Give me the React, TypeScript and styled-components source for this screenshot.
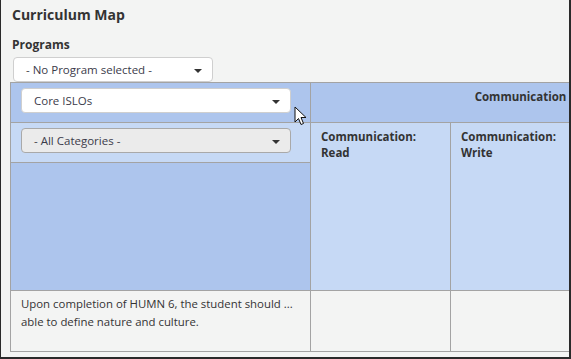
import React from 'react'
import styled, { createGlobalStyle } from 'styled-components'

const GlobalStyle = createGlobalStyle`
  html, body {
    margin: 0;
    padding: 0;
    background: #ffffff;
  }
  body {
    font-family: 'Open Sans', 'Noto Sans', sans-serif;
    color: #333333;
  }
`

const Frame = styled.div`
  position: relative;
  box-sizing: border-box;
  width: 571px;
  height: 359px;
  overflow: hidden;
  background: #f3f4f3;
  border-left: 1px solid #2a2a2a;
  border-right: 2px solid #2a2a2a;
  border-bottom: 2px solid #2a2a2a;
  padding: 5px 0 0 11px;
`

const Title = styled.h1`
  margin: 0;
  font-size: 14px;
  font-weight: 700;
  line-height: 20px;
  color: #333;
`

const Label = styled.div`
  margin-top: 12px;
  font-size: 12px;
  font-weight: 700;
  line-height: 16px;
  color: #333;
`

const SelectBox = styled.div<{ $width: number; $muted?: boolean }>`
  box-sizing: border-box;
  width: ${(p) => p.$width}px;
  height: 25px;
  display: flex;
  align-items: center;
  justify-content: space-between;
  padding: 0 10px 0 12px;
  border: 1px solid ${(p) => (p.$muted ? '#a9a9a9' : '#cfcfcf')};
  border-radius: 4px;
  background: ${(p) => (p.$muted ? '#ebebeb' : '#ffffff')};
  font-size: 11.5px;
  font-weight: 400;
  color: #3b3b4a;
  text-align: left;
`

const Caret = styled.span`
  width: 0;
  height: 0;
  border-left: 4px solid transparent;
  border-right: 4px solid transparent;
  border-top: 4px solid #333;
  margin-top: 2px;
`

const ProgramSelect = styled(SelectBox)`
  margin-top: 4px;
  margin-left: 1px;
`

const TableWrap = styled.div`
  margin-left: -2px;
  width: 760px;
`

const MapTable = styled.table`
  border-collapse: collapse;
  table-layout: fixed;
  width: 720px;
  border-left: 1px solid #a3a3a3;
  border-top: 1px solid #a3a3a3;
`

const Cell = styled.td<{ $bg: string; $h?: number }>`
  background: ${(p) => p.$bg};
  border: 1px solid #a3a3a3;
  padding: 0;
  height: ${(p) => (p.$h ? `${p.$h}px` : 'auto')};
  vertical-align: top;
  text-align: left;
  font-size: 11.4px;
  font-weight: 400;
  color: #333;
`

const SelectCell = styled(Cell)`
  box-sizing: border-box;
  padding: 5px 0 0 10px;
`

const GroupHead = styled(Cell)`
  padding-top: 6px;
  text-align: center;
  font-size: 11.5px;
  font-weight: 700;
  line-height: 16px;
`

const OutcomeHead = styled(Cell)`
  padding: 6px 10px;
  font-size: 11.5px;
  font-weight: 700;
  line-height: 16px;
`

const OutcomeText = styled(Cell)`
  padding: 4px 10px;
  line-height: 18px;
`

const Cursor = styled.svg`
  position: absolute;
  left: 293px;
  top: 106px;
`

const DARK = '#adc5ed'
const LIGHT = '#c6d9f5'
const PAPER = '#f3f4f3'

export default function App() {
  return (
    <>
      <GlobalStyle />
      <Frame>
        <Title>Curriculum Map</Title>
        <Label>Programs</Label>
        <ProgramSelect $width={200}>
          <span>- No Program selected -</span>
          <Caret />
        </ProgramSelect>
        <TableWrap>
          <MapTable>
            <colgroup>
              <col style={{ width: 300 }} />
              <col style={{ width: 140 }} />
              <col style={{ width: 140 }} />
              <col style={{ width: 140 }} />
            </colgroup>
            <tbody>
              <tr>
                <SelectCell $bg={DARK} $h={40}>
                  <SelectBox $width={270}>
                    <span>Core ISLOs</span>
                    <Caret />
                  </SelectBox>
                </SelectCell>
                <GroupHead as='th' colSpan={3} $bg={DARK}>
                  Communication
                </GroupHead>
              </tr>
              <tr>
                <SelectCell $bg={LIGHT} $h={40}>
                  <SelectBox $width={270} $muted>
                    <span>- All Categories -</span>
                    <Caret />
                  </SelectBox>
                </SelectCell>
                <OutcomeHead as='th' rowSpan={2} $bg={LIGHT}>
                  Communication:
                  <br />
                  Read
                </OutcomeHead>
                <OutcomeHead as='th' rowSpan={2} $bg={LIGHT}>
                  Communication:
                  <br />
                  Write
                </OutcomeHead>
                {/* off-screen column, scrolled out of view */}
                <OutcomeHead as='th' rowSpan={2} $bg={LIGHT} />
              </tr>
              <tr>
                <Cell $bg={DARK} $h={127} />
              </tr>
              <tr>
                <OutcomeText $bg={PAPER} $h={52}>
                  Upon completion of HUMN 6, the student should ...
                  <br />
                  able to define nature and culture.
                </OutcomeText>
                <Cell $bg={PAPER} />
                <Cell $bg={PAPER} />
                <Cell $bg={PAPER} />
              </tr>
            </tbody>
          </MapTable>
        </TableWrap>
        <Cursor width='13' height='21' viewBox='0 0 13 21'>
          <path
            d='M1 1 L1 16 L4.5 12.5 L7 18.5 L9.5 17.5 L7 11.5 L12 11.5 Z'
            fill='#ffffff'
            stroke='#111111'
            strokeWidth='1'
            strokeLinejoin='miter'
          />
        </Cursor>
      </Frame>
    </>
  )
}
